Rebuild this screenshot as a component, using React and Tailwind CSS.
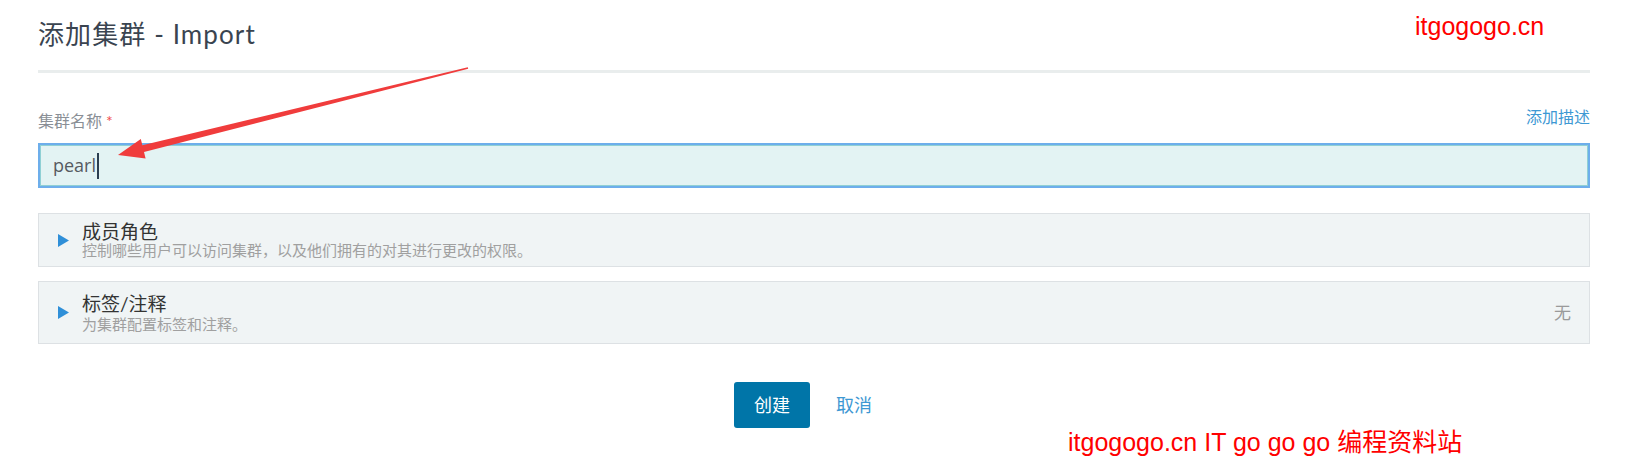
import React from "react";

const FONT = { fontFamily: 'Lato, "Noto Sans CJK SC", sans-serif' };
const OPEN = { fontFamily: '"Open Sans", "Noto Sans CJK SC", sans-serif' };
const WM = { fontFamily: '"Liberation Sans", Arial, "Noto Sans CJK SC", sans-serif' };

function Triangle() {
  return (
    <svg width="11" height="13" viewBox="0 0 11 13" className="shrink-0">
      <polygon points="0,0 11,6.5 0,13" fill="#2f8fd8" />
    </svg>
  );
}

function Section({ title, desc, right, tall }) {
  return (
    <div
      className={`flex items-center border border-[#dde1e4] bg-[#f0f4f5] pl-[19px] pr-[18px] ${
        tall ? "py-[10px]" : "py-[7px]"
      }`}
    >
      <Triangle />
      <div className="ml-[13px] flex-1">
        <div className={`text-[19px] text-[#333333] ${tall ? "leading-[23px]" : "leading-[21px]"}`}>{title}</div>
        <div className={`text-[15px] text-[#a0a0a0] ${tall ? "leading-[18px]" : "leading-[17px]"}`}>{desc}</div>
      </div>
      {right && <div className="text-[17px] text-[#9a9a9a]">{right}</div>}
    </div>
  );
}

export default function App() {
  return (
    <div className="relative h-[461px] w-full overflow-hidden bg-white" style={FONT}>
      <div className="pl-[38px] pr-[41px]">
        <div className="pt-[18px] text-[26px] leading-[32px] tracking-[1.1px] text-[#3a4450]">添加集群 - Import</div>
        <div className="mt-[20px] h-[3px] bg-[#e9eded]" />

        <div className="mt-[34px] flex items-start justify-between">
          <div className="mt-[4px] text-[16px] leading-[20px] text-[#8a8f96]">
            集群名称 <span className="text-[#f04d4d]">*</span>
          </div>
          <div className="text-[16px] leading-[20px] text-[#3d98d3]">添加描述</div>
        </div>

        <div className="mt-[12px] flex h-[45px] items-center border-2 border-[#6daeeb] bg-[#e3f3f3] pl-[13px] shadow-[inset_0_0_0_1px_#8fd0d4]">
          <span className="text-[18px] text-[#555a60]" style={OPEN}>pearl</span>
          <span className="ml-[1px] inline-block h-[26px] w-[1.5px] bg-[#2c3e50]" />
        </div>

        <div className="mt-[25px]">
          <Section title="成员角色" desc="控制哪些用户可以访问集群，以及他们拥有的对其进行更改的权限。" />
        </div>
        <div className="mt-[14px]">
          <Section title="标签/注释" desc="为集群配置标签和注释。" right="无" tall />
        </div>

        <div className="mt-[38px] flex items-center justify-center">
          <button className="h-[46px] w-[76px] rounded-[3px] bg-[#0075a8] text-[18px] text-white">创建</button>
          <span className="pl-[26px] pr-[22px] text-[18px] text-[#3d98d3]">取消</span>
        </div>
      </div>

      <div className="absolute left-[1415px] top-[14px] text-[25px] leading-none text-[#ff0000]" style={WM}>
        itgogogo.cn
      </div>
      <div className="absolute left-[1068px] top-[430px] whitespace-nowrap text-[25px] leading-none text-[#ff0000]" style={WM}>
        itgogogo.cn IT go go go 编程资料站
      </div>

      <svg className="pointer-events-none absolute left-0 top-0" width="1631" height="461">
        <polygon
          points="467.8,67.3 142.4,145.3 140.8,139 118,155 145.6,158.4 144,152.1 468.2,68.7"
          fill="#f03c3c"
        />
      </svg>
    </div>
  );
}
